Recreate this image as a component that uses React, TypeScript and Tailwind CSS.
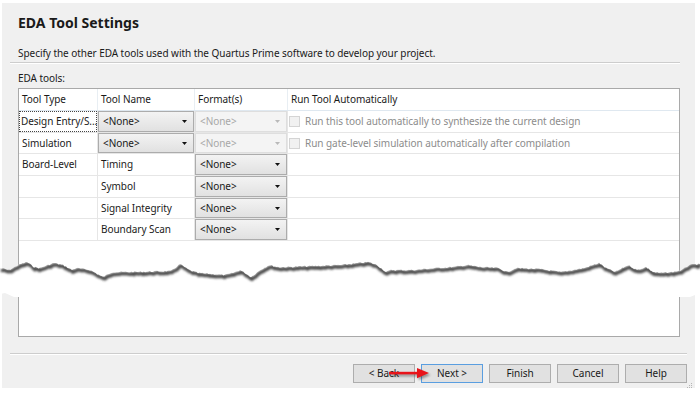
import React from "react";

// точки рваного края (x, y) — по скриншоту
const tearKeys: [number, number][] = [
  [0, 268], [9, 270], [18, 265], [27, 262], [34, 267], [40, 268], [45, 266], [54, 263],
  [63, 265], [72, 270], [76, 268], [90, 270], [103, 277], [112, 272], [130, 272], [171, 271],
  [180, 264], [189, 270], [198, 273], [225, 275], [233, 273], [240, 270], [245, 273], [251, 277],
  [260, 270], [269, 265], [278, 267], [285, 267], [314, 266], [341, 265], [368, 262], [377, 265],
  [386, 272], [391, 270], [413, 270], [436, 268], [453, 267], [467, 265], [480, 267], [498, 268],
  [507, 272], [516, 268], [539, 269], [561, 272], [584, 268], [599, 263], [606, 268], [615, 272],
  [628, 265], [637, 270], [646, 267], [653, 272], [660, 273], [673, 272], [682, 270], [689, 265],
  [700, 264],
];

// мелкий шум по краю, чтобы было похоже на бумагу
function buildTear() {
  let seed = 7;
  const rnd = () => {
    seed = (seed * 9301 + 49297) % 233280;
    return seed / 233280;
  };
  const pts: string[] = [];
  for (let i = 0; i < tearKeys.length - 1; i++) {
    const [x1, y1] = tearKeys[i];
    const [x2, y2] = tearKeys[i + 1];
    const steps = Math.max(1, Math.round((x2 - x1) / 1.5));
    for (let s = 0; s < steps; s++) {
      const t = s / steps;
      const x = x1 + (x2 - x1) * t;
      const y = y1 + (y2 - y1) * t + (rnd() - 0.5) * 1.4;
      pts.push(`${x.toFixed(1)},${y.toFixed(1)}`);
    }
  }
  pts.push("700,264");
  return pts.join(" ");
}

const tearLine = buildTear();
const bandPoly = `${tearLine} 700,293 690,297 14,297 5,293 0,294`;

function Caret({ color }: { color: string }) {
  return (
    <svg width="5" height="3" viewBox="0 0 5 3" className="shrink-0">
      <path d="M0 0h5L2.5 3z" fill={color} />
    </svg>
  );
}

function Select({ disabled = false }: { disabled?: boolean }) {
  return (
    <div
      className={`flex h-full w-full items-center justify-between border pl-[4px] pr-[6px] ${
        disabled
          ? "border-[#dedede] bg-[#f4f4f4] text-[#a8a8a8]"
          : "border-[#acacac] bg-gradient-to-b from-[#f3f3f3] to-[#e1e1e1] text-[#1a1a1a]"
      }`}
    >
      <span>&lt;None&gt;</span>
      <Caret color={disabled ? "#b9b9b9" : "#111"} />
    </div>
  );
}

function CheckCell({ text }: { text: string }) {
  return (
    <div className="flex h-full items-center gap-[5px] pl-[1px] text-[#8c8c8c]">
      <div className="h-[11px] w-[11px] border border-[#d4d4d4] bg-[#f1f1f1]" />
      <span>{text}</span>
    </div>
  );
}

const rowCls = "grid h-[21.7px] grid-cols-[79px_97px_93px_1fr] border-b border-[#e6e6e6]";
const cellCls = "h-full overflow-hidden border-r border-[#e6e6e6]";

function Row({
  type,
  name,
  format,
  run,
}: {
  type: React.ReactNode;
  name: React.ReactNode;
  format: React.ReactNode;
  run?: React.ReactNode;
}) {
  return (
    <div className={rowCls}>
      <div className={cellCls}>{type}</div>
      <div className={cellCls}>{name}</div>
      <div className={cellCls}>{format}</div>
      <div className="h-full">{run}</div>
    </div>
  );
}

const label = (t: string) => <div className="flex h-full items-center pl-[3px]">{t}</div>;

const buttons = ["< Back", "Next >", "Finish", "Cancel", "Help"];

export default function App() {
  return (
    <div className="relative h-[395px] w-[700px] overflow-hidden whitespace-nowrap bg-white pl-[2px] pt-[3px] font-['Noto_Sans',sans-serif] text-[10px] tracking-[-0.05px] text-[#1a1a1a]">
      <div className="flex h-[385px] w-[693px] flex-col bg-[#f0f0f0]">
        <h1 className="ml-[16px] mt-[10px] text-[14px] font-bold leading-[20px] tracking-normal">EDA Tool Settings</h1>
        <p className="ml-[16px] mt-[12px] leading-[16px]">
          Specify the other EDA tools used with the Quartus Prime software to develop your project.
        </p>
        <div className="ml-[8px] mt-[1px] h-[2px] w-[670px] border-b border-t border-b-white border-t-[#cdcdcd]" />
        <div className="ml-[16px] mt-[7px] leading-[15px]">EDA tools:</div>

        {/* таблица */}
        <div className="ml-[16px] mt-[2px] flex h-[249px] w-[662px] flex-col border border-[#a9a9a9] bg-white">
          <div className="grid h-[22px] grid-cols-[79px_97px_93px_1fr] border-b border-[#dfe8f0]">
            <div className="flex items-center border-r border-[#e8eef3] pl-[3px]">Tool Type</div>
            <div className="flex items-center border-r border-[#e8eef3] pl-[3px]">Tool Name</div>
            <div className="flex items-center border-r border-[#e8eef3] pl-[3px]">Format(s)</div>
            <div className="flex items-center pl-[3px]">Run Tool Automatically</div>
          </div>
          <Row
            type={
              <div className="flex h-full items-center border border-dotted border-[#444] pl-[1px]">
                Design Entry/S...
              </div>
            }
            name={<Select />}
            format={<Select disabled />}
            run={<CheckCell text="Run this tool automatically to synthesize the current design" />}
          />
          <Row
            type={label("Simulation")}
            name={<Select />}
            format={<Select disabled />}
            run={<CheckCell text="Run gate-level simulation automatically after compilation" />}
          />
          <Row type={label("Board-Level")} name={label("Timing")} format={<Select />} />
          <Row type={null} name={label("Symbol")} format={<Select />} />
          <Row type={null} name={label("Signal Integrity")} format={<Select />} />
          <Row type={null} name={label("Boundary Scan")} format={<Select />} />
          <div className="flex-1" />
        </div>

        <div className="ml-[8px] mt-[16px] h-[2px] w-[677px] border-b border-t border-b-white border-t-[#cdcdcd]" />

        <div className="mt-[9px] flex justify-end gap-[6px] pr-[8px]">
          {buttons.map((b) => (
            <div
              key={b}
              className={`flex h-[19px] w-[62px] items-center justify-center border bg-[#e1e1e1] ${
                b === "Next >" ? "border-[#5a9ee0]" : "border-[#adadad]"
              }`}
            >
              {b}
            </div>
          ))}
        </div>
      </div>

      {/* рваный край и стрелка поверх окна */}
      <svg className="pointer-events-none absolute left-0 top-0" width="700" height="395" viewBox="0 0 700 395">
        <defs>
          <filter id="soft" x="-5%" y="-50%" width="110%" height="200%">
            <feGaussianBlur stdDeviation="1" />
          </filter>
          <clipPath id="band">
            <polygon points={bandPoly} />
          </clipPath>
          <filter id="ashadow" x="-20%" y="-100%" width="140%" height="300%">
            <feGaussianBlur stdDeviation="1" />
          </filter>
        </defs>
        <polygon points={bandPoly} fill="#fff" />
        <g clipPath="url(#band)">
          <polyline
            points={tearLine}
            fill="none"
            stroke="#4a4a4a"
            strokeWidth="3.5"
            transform="translate(1 2)"
            filter="url(#soft)"
          />
        </g>

        {/* красная стрелка */}
        <g transform="translate(1.5 2)" filter="url(#ashadow)" opacity="0.45">
          <path d="M389 371.8h29v2.6h-29z" fill="#333" />
          <path d="M417 368l12 5.1-12 5.1z" fill="#333" />
        </g>
        <path d="M389 371.8h29v2.6h-29z" fill="#e8141a" />
        <path d="M417 368l12 5.1-12 5.1z" fill="#e8141a" />

        {/* уголок для растягивания */}
        <g fill="#b5b5b5">
          <rect x="691" y="383" width="1" height="1" />
          <rect x="689" y="385" width="1" height="1" />
          <rect x="691" y="385" width="1" height="1" />
          <rect x="687" y="387" width="1" height="1" />
          <rect x="689" y="387" width="1" height="1" />
          <rect x="691" y="387" width="1" height="1" />
        </g>
      </svg>
    </div>
  );
}
